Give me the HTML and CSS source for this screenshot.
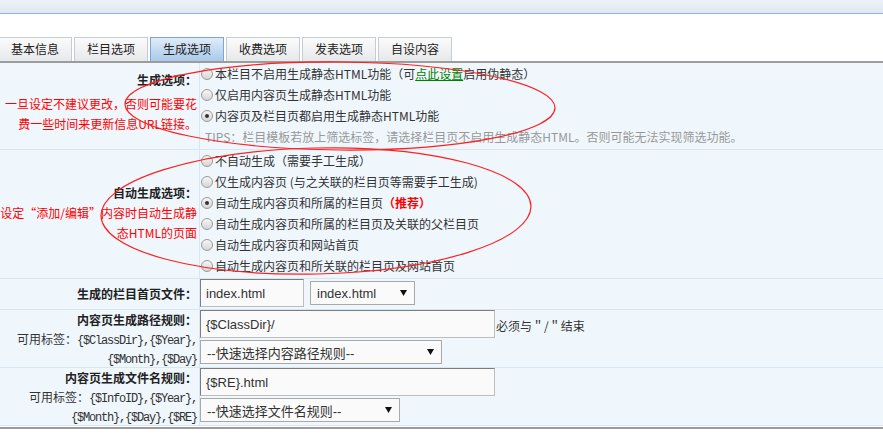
FILE: index.html
```html
<!DOCTYPE html>
<html lang="zh-CN">

<head>
    <meta charset="utf-8">
    <meta name="viewport" content="width=device-width, initial-scale=1.0">
    <title>生成选项</title>
    <link rel="stylesheet" href="styles.css">
</head>

<body>

    <div class="topbar"></div>

    <ul class="tabs">
        <li>基本信息</li>
        <li>栏目选项</li>
        <li class="cur">生成选项</li>
        <li>收费选项</li>
        <li>发表选项</li>
        <li>自设内容</li>
    </ul>

    <div class="formwrap">
        <table class="form">
            <tr>
                <td class="lab lab1">
                    <div class="title">生成选项：</div>
                    <div class="red">一旦设定不建议更改，否则可能要花<br>费一些时间来更新信息URL链接。</div>
                </td>
                <td class="val val1">
                    <div class="opt"><span class="radio"></span>本栏目不启用生成静态HTML功能（可<a href="#">点此设置</a>启用伪静态）</div>
                    <div class="opt"><span class="radio"></span>仅启用内容页生成静态HTML功能</div>
                    <div class="opt"><span class="radio on"></span>内容页及栏目页都启用生成静态HTML功能</div>
                    <div class="tips">TIPS：栏目模板若放上筛选标签，请选择栏目页不启用生成静态HTML。否则可能无法实现筛选功能。</div>
                </td>
            </tr>
            <tr>
                <td class="lab lab2">
                    <div class="title">自动生成选项：</div>
                    <div class="red">设定“添加/编辑”内容时自动生成静<br>态HTML的页面</div>
                </td>
                <td class="val val2">
                    <div class="opt"><span class="radio"></span>不自动生成（需要手工生成）</div>
                    <div class="opt"><span class="radio"></span>仅生成内容页 (与之关联的栏目页等需要手工生成)</div>
                    <div class="opt"><span class="radio on"></span>自动生成内容页和所属的栏目页<b class="hot">（推荐）</b></div>
                    <div class="opt"><span class="radio"></span>自动生成内容页和所属的栏目页及关联的父栏目页</div>
                    <div class="opt"><span class="radio"></span>自动生成内容页和网站首页</div>
                    <div class="opt"><span class="radio"></span>自动生成内容页和所关联的栏目页及网站首页</div>
                </td>
            </tr>
            <tr>
                <td class="lab lab3"><div class="title">生成的栏目首页文件：</div></td>
                <td class="val val3">
                    <input class="txt w-index" type="text" value="index.html">
                    <div class="sel w-index2"><span>index.html</span><svg width="7" height="6" viewBox="0 0 7 6"><path d="M0 0h7L3.5 6z" fill="#111"/></svg></div>
                </td>
            </tr>
            <tr>
                <td class="lab lab4">
                    <div class="title">内容页生成路径规则：</div>
                    <div>可用标签：<span class="code">{$ClassDir},{$Year},</span></div>
                    <div><span class="code">{$Month},{$Day}</span></div>
                </td>
                <td class="val val4">
                    <div class="line"><input class="txt w-long" type="text" value="{$ClassDir}/"><span class="note">必须与＂/＂结束</span></div>
                    <div class="sel w-path"><span>--快速选择内容路径规则--</span><svg width="7" height="6" viewBox="0 0 7 6"><path d="M0 0h7L3.5 6z" fill="#111"/></svg></div>
                </td>
            </tr>
            <tr>
                <td class="lab lab4">
                    <div class="title">内容页生成文件名规则：</div>
                    <div>可用标签：<span class="code">{$InfoID},{$Year},</span></div>
                    <div><span class="code">{$Month},{$Day},{$RE}</span></div>
                </td>
                <td class="val val4">
                    <div class="line"><input class="txt w-long" type="text" value="{$RE}.html"></div>
                    <div class="sel w-file"><span>--快速选择文件名规则--</span><svg width="7" height="6" viewBox="0 0 7 6"><path d="M0 0h7L3.5 6z" fill="#111"/></svg></div>
                </td>
            </tr>
        </table>
    </div>

    <!-- rode ringe (markering over skærmbilledet) -->
    <svg class="marks" width="883" height="445" viewBox="0 0 883 445">
        <ellipse cx="340" cy="106" rx="215" ry="44" transform="rotate(0.5 340 106)" />
        <ellipse cx="316" cy="211" rx="215" ry="63" transform="rotate(-1.3 316 211)" />
    </svg>

</body>

</html>
```

FILE: styles.css
```css
body {
    margin: 0;
    padding: 0;
    position: relative;
    background-color: #fff;
    color: #333;
    font: 12px "Noto Sans CJK SC", sans-serif;
}

.topbar {
    height: 13px;
    background: linear-gradient(#eef2f8, #dfe7f2);
    border-bottom: 1px solid #8fb4d2;
}

.tabs {
    list-style: none;
    margin: 23px 0 0;
    padding: 0;
    height: 24px;
    display: flex;
    gap: 2px;
    border-bottom: 2px solid #9c9c9c;
}

.tabs li {
    box-sizing: border-box;
    width: 74px;
    height: 24px;
    padding-top: 1px;
    border: 1px solid #c3ccd9;
    border-bottom: 0;
    background: linear-gradient(#fbfbfb, #e7e8ea);
    text-align: center;
    line-height: 20px;
    color: #222;
}

.tabs li:first-child {
    margin-left: -2px;
}

.tabs .cur {
    background: linear-gradient(#dfecf8, #a9c9ea);
    border-color: #7ca6d0;
}

.formwrap {
    border-bottom: 2px solid #9c9c9c;
    padding-bottom: 1px;
}

.form {
    width: 100%;
    border-collapse: separate;
    border-spacing: 0;
    background-color: #eff7fd;
}

.form td {
    padding: 0;
    vertical-align: top;
    border-bottom: 1px solid #d6e7f3;
}

.lab {
    width: 197px;
    padding-right: 2px !important;
    border-right: 1px solid #d6e7f3;
    text-align: right;
    white-space: nowrap;
}

.title {
    font-weight: bold;
    color: #222;
    line-height: 20px;
}

.red {
    color: #f00;
    line-height: 20px;
}

.lab1 {
    padding-top: 7px !important;
}

.lab1 .red {
    margin-top: 4px;
}

.lab2 {
    padding-top: 33px !important;
}

.lab3 .title {
    line-height: 29px;
}

.lab4 div {
    height: 19px;
    line-height: 19px;
}

.code {
    font-family: "Liberation Mono", monospace;
    letter-spacing: -1.2px;
    line-height: 1;
}

.val1,
.val2 {
    padding-bottom: 2px !important;
}

.opt {
    height: 21px;
    display: flex;
    align-items: center;
    white-space: nowrap;
}

.radio {
    box-sizing: border-box;
    width: 12px;
    height: 12px;
    margin: 0 2px 0 1px;
    border: 1px solid #9a9a9a;
    border-radius: 50%;
    background: linear-gradient(#f6f6f6, #d6d6d6);
    display: grid;
    place-items: center;
    flex: none;
}

.radio.on::after {
    content: "";
    width: 4px;
    height: 4px;
    border-radius: 50%;
    background-color: #333;
}

.opt a {
    color: #008000;
}

.hot {
    color: #f00;
}

.tips {
    height: 21px;
    line-height: 21px;
    padding-left: 5px;
    color: #999;
    white-space: nowrap;
}

.txt {
    display: block;
    box-sizing: border-box;
    height: 28px;
    margin: 0;
    padding: 0 5px;
    border: 1px solid;
    border-color: #7d7d7d #bdbdbd #bdbdbd #7d7d7d;
    background-color: #fafafa;
    color: #333;
    font: 13px "Liberation Sans", "Noto Sans CJK SC", sans-serif;
    outline: none;
}

.sel {
    box-sizing: border-box;
    height: 24px;
    padding: 0 7px 0 6px;
    border: 1px solid #a9a9a9;
    background-color: #fafafa;
    display: flex;
    align-items: center;
    justify-content: space-between;
    font: 13px "Liberation Sans", "Noto Sans CJK SC", sans-serif;
    color: #333;
}

.val3 {
    height: 28px;
    padding-bottom: 2px !important;
    display: flex;
    align-items: center;
    gap: 6px;
}

.val4 {
    height: 54px;
    padding-bottom: 3px !important;
}

.val4 .sel {
    margin-top: 2px;
}

.line {
    height: 28px;
    display: flex;
    align-items: center;
}

.note {
    margin-left: 1px;
    padding-top: 3px;
    line-height: 16px;
}

.w-index {
    width: 104px;
}

.w-index2 {
    width: 105px;
}

.w-long {
    width: 295px;
}

.w-path {
    width: 242px;
}

.w-file {
    width: 200px;
}

.marks {
    position: absolute;
    left: 0;
    top: 0;
    pointer-events: none;
}

.marks ellipse {
    fill: none;
    stroke: #ff1f1f;
    stroke-width: 1.2;
}
```
